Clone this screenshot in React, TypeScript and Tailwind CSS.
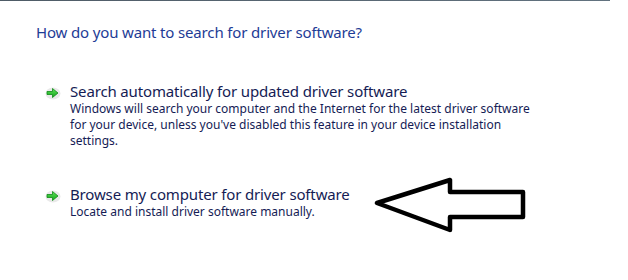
import React from 'react'

function GreenArrow() {
  return (
    <svg width="16" height="14" viewBox="0 0 16 14" className="shrink-0">
      <defs>
        <linearGradient id="ga" x1="0" y1="0" x2="0" y2="1">
          <stop offset="0" stopColor="#5fe35a" />
          <stop offset="1" stopColor="#12a51a" />
        </linearGradient>
      </defs>
      <ellipse cx="8" cy="7.5" rx="7.5" ry="6" fill="#e9e9e9" />
      <path d="M2 5.5h5.5V2.5L13 7l-5.5 4.5V8.5H2z" fill="url(#ga)" stroke="#0f8a16" strokeWidth="0.8" strokeLinejoin="round" />
    </svg>
  )
}

function Option({ title, note }: { title: string; note: string[] }) {
  return (
    <div className="flex items-start gap-[9px] pl-[45px]">
      <div className="pt-[4px]">
        <GreenArrow />
      </div>
      <div>
        <div className="text-[15px] leading-[19px] tracking-[-0.15px] text-[#151c55]">{title}</div>
        <div className="text-[12px] leading-[16px] text-[#151c55]">
          {note.map((l) => (
            <div key={l}>{l}</div>
          ))}
        </div>
      </div>
    </div>
  )
}

export default function App() {
  return (
    <div
      className="relative w-[628px] h-[280px] bg-white overflow-hidden"
      style={{ fontFamily: '"Noto Sans", "Open Sans", sans-serif' }}
    >
      <div className="h-px w-[610px] bg-gradient-to-r from-[#4e5b66] to-[#62727f]" />
      <div className="pl-[36px] pt-[21px] text-[15px] leading-[20px] tracking-[-0.15px] text-[#1e3c96]">
        How do you want to search for driver software?
      </div>
      <div className="mt-[40px] flex flex-col gap-[36px]">
        <Option
          title="Search automatically for updated driver software"
          note={[
            'Windows will search your computer and the Internet for the latest driver software',
            "for your device, unless you've disabled this feature in your device installation",
            'settings.',
          ]}
        />
        <Option
          title="Browse my computer for driver software"
          note={['Locate and install driver software manually.']}
        />
      </div>
      <svg
        className="absolute left-[370px] top-[172px]"
        width="160"
        height="66"
        viewBox="370 172 160 66"
      >
        <path
          d="M377 203L450 180V192H523V217H450V230Z"
          fill="white"
          stroke="black"
          strokeWidth="4.5"
          strokeLinejoin="round"
        />
      </svg>
    </div>
  )
}
